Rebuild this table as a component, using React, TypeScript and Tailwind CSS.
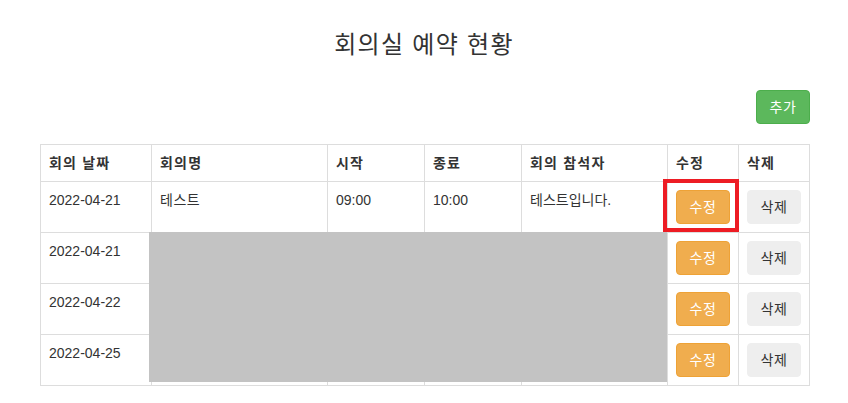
const rows = [
  { date: "2022-04-21", title: "테스트", start: "09:00", end: "10:00", members: "테스트입니다." },
  { date: "2022-04-21", title: "", start: "", end: "", members: "" },
  { date: "2022-04-22", title: "", start: "", end: "", members: "" },
  { date: "2022-04-25", title: "", start: "", end: "", members: "" },
];

const headers = [
  { label: "회의 날짜", w: "w-[111px]" },
  { label: "회의명", w: "w-[176px]" },
  { label: "시작", w: "w-[97px]" },
  { label: "종료", w: "w-[97px]" },
  { label: "회의 참석자", w: "w-[146px]" },
  { label: "수정", w: "w-[71px]" },
  { label: "삭제", w: "w-[71px]" },
];

export default function App() {
  return (
    <div className="min-h-[403px] bg-white text-[#333] font-['Liberation_Sans','Noto_Sans_CJK_KR',sans-serif] text-sm leading-5">
      <div className="ml-[40px] w-[770px]">
        {/* Title */}
        <h3 className="pt-[31px] text-center text-[24px] leading-[27px] tracking-[1.3px] ml-[-40px] w-[848px]">
          회의실 예약 현황
        </h3>

        {/* Add button */}
        <div className="mt-[32px] flex justify-end">
          <button className="h-[34px] w-[54px] flex items-center justify-center rounded border border-[#4cae4c] bg-[#5cb85c] text-white text-sm tracking-[0.5px]">
            추가
          </button>
        </div>

        {/* Table */}
        <div className="relative mt-[20px]">
          <table className="w-[770px] table-fixed border-collapse">
            <thead>
              <tr>
                {headers.map((h) => (
                  <th
                    key={h.label}
                    className={`${h.w} border border-[#ddd] px-2 py-2 text-left font-bold leading-5 h-[37px] tracking-[1.2px]`}
                  >
                    {h.label}
                  </th>
                ))}
              </tr>
            </thead>
            <tbody>
              {rows.map((r, i) => (
                <tr key={i}>
                  <td className="border border-[#ddd] p-2 align-top h-[51px]">{r.date}</td>
                  <td className="border border-[#ddd] p-2 align-top tracking-[0.5px]">{r.title}</td>
                  <td className="border border-[#ddd] p-2 align-top">{r.start}</td>
                  <td className="border border-[#ddd] p-2 align-top">{r.end}</td>
                  <td className="border border-[#ddd] p-2 align-top">{r.members}</td>
                  <td className="border border-[#ddd] p-2 align-top">
                    <button className="h-[34px] w-[54px] flex items-center justify-center rounded border border-[#eea236] bg-[#f0ad4e] text-white text-sm tracking-[0.5px]">
                      수정
                    </button>
                  </td>
                  <td className="border border-[#ddd] p-2 align-top">
                    <button className="h-[34px] w-[54px] flex items-center justify-center rounded border border-[#eeeeee] bg-[#eeeeee] text-[#333] text-sm tracking-[0.5px]">
                      삭제
                    </button>
                  </td>
                </tr>
              ))}
            </tbody>
          </table>

          {/* redacted area */}
          <div className="absolute left-[109px] top-[88px] w-[518px] h-[150px] bg-[#c3c3c3]" />
          {/* highlight box */}
          <div className="absolute left-[623px] top-[35px] w-[76px] h-[53px] border-[4px] border-[#ed1c24]" />
        </div>
      </div>
    </div>
  );
}
